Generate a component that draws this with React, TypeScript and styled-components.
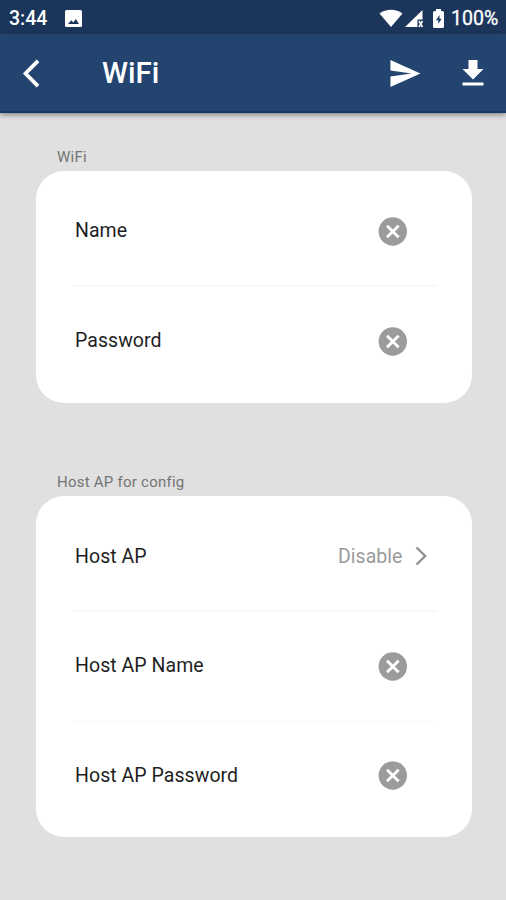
import React from 'react';
import styled, { createGlobalStyle } from 'styled-components';

const GlobalStyle = createGlobalStyle`
  *, *::before, *::after { box-sizing: border-box; }
  html, body { margin: 0; padding: 0; background: #e0e0e0; }
  body { font-family: Roboto, 'Noto Sans', sans-serif; }
  svg { display: block; flex: none; }
`;

const Screen = styled.div`
  display: flex;
  flex-direction: column;
  width: 506px;
  height: 900px;
  overflow: hidden;
  background: #e0e0e0;
`;

const StatusBar = styled.header`
  display: flex;
  align-items: center;
  height: 34px;
  padding: 3px 7px 0 9px;
  background: #1b355b;
  color: #fff;
  font-size: 19.5px;
  font-weight: 500;
  line-height: 30px;
`;

const Clock = styled.span`
  width: 56px;
`;

const StatusIcons = styled.div`
  display: flex;
  align-items: center;
  margin-left: auto;
`;

const Battery = styled.span`
  width: 48px;
  margin-left: 5px;
  font-weight: 400;
  -webkit-text-stroke: 0.3px #fff;
`;

const AppBar = styled.nav`
  display: flex;
  align-items: center;
  flex: none;
  height: 79px;
  padding: 1px 15px 0 20px;
  background: #22446f;
  border-bottom: 2px solid #17376a;
  box-shadow: 0 2px 5px rgba(0, 0, 0, 0.4);
  color: #fff;
`;

const IconButton = styled.button<{ $gap?: number }>`
  display: flex;
  padding: 0;
  margin: 0 0 0 ${({ $gap = 0 }) => $gap}px;
  border: 0;
  background: none;
  color: inherit;
`;

const Title = styled.h1`
  flex: 1;
  margin: 0 0 0 60px;
  font-size: 29.5px;
  font-weight: 500;
  line-height: 40px;
`;

const Content = styled.main`
  display: flex;
  flex-direction: column;
  padding: 34px 34.5px 0 36px;
`;

const Section = styled.section<{ $gap?: number }>`
  margin-top: ${({ $gap = 0 }) => $gap}px;
`;

const SectionLabel = styled.h2`
  height: 24px;
  margin: 0;
  padding-left: 21px;
  color: #747474;
  font-size: 15px;
  font-weight: 400;
  letter-spacing: 0.24px;
  line-height: 20px;
`;

const Card = styled.div<{ $height: number }>`
  height: ${({ $height }) => $height}px;
  padding: 5px 35px 0 36px;
  border-radius: 28px;
  background: #fff;
`;

const Row = styled.div<{ $height: number; $line?: string; $top?: number }>`
  display: flex;
  align-items: center;
  height: ${({ $height }) => $height}px;
  padding: ${({ $top = 0 }) => $top}px 7px 0 3px;
  border-bottom: 2px solid ${({ $line = 'transparent' }) => $line};
`;

const RowLabel = styled.span`
  flex: 1;
  color: #1f1f1f;
  font-size: 19.5px;
  letter-spacing: 0.05px;
  line-height: 24px;
`;

const ClearButton = styled(IconButton)`
  margin: 1px 20px 0 0;
  color: #9b9b9b;
`;

const Value = styled.span`
  margin-right: 11px;
  color: #9b9b9b;
  font-size: 19.5px;
  letter-spacing: 0.05px;
  line-height: 24px;
`;

const Clear = () => (
  <ClearButton aria-label="Clear">
    <svg width="34" height="34" viewBox="0 0 34 34">
      <circle cx="16.800" cy="16.500" r="14.200" fill="currentColor" />
      <path d="M11 10.700l11.600 11.600M22.600 10.700L11 22.300" stroke="#fff" strokeWidth="2.900" />
    </svg>
  </ClearButton>
);

export default function App() {
  return (
    <Screen>
      <GlobalStyle />
      <StatusBar>
        <Clock>3:44</Clock>
        <svg width="17" height="17" viewBox="0 0 17 17">
          <path
            fill="#fff"
            fillRule="evenodd"
            d="M1.500 0h14A1.500 1.500 0 0 1 17 1.500v14a1.500 1.500 0 0 1-1.500 1.500h-14A1.500 1.500 0 0 1 0 15.500v-14A1.500 1.500 0 0 1 1.500 0zM3 14h11l-3.200-5-2.500 3.400-2-2.200z"
          />
        </svg>
        <StatusIcons>
          <svg width="72" height="22" viewBox="0 0 72 22" fill="#fff">
            <path d="M5.500 5.500C12 .5 22 .5 28.500 5.500L17 19z" />
            <path d="M48.500 2v9.500h-5V19H31z" />
            <path d="M45 13l3.500 6M48.500 13L45 19" stroke="#fff" strokeWidth="1.500" />
            <path
              fillRule="evenodd"
              d="M62 1h5v2h1.500a1.500 1.500 0 0 1 1.500 1.500v14A1.500 1.500 0 0 1 68.500 20h-8a1.500 1.500 0 0 1-1.500-1.500v-14A1.500 1.500 0 0 1 60.500 3H62zM65.500 7L62 12.200h2.300V16l3.300-5.300h-2.100z"
            />
          </svg>
          <Battery>100%</Battery>
        </StatusIcons>
      </StatusBar>
      <AppBar>
        <IconButton aria-label="Back">
          <svg width="22" height="32" viewBox="0 0 22 32" fill="none" stroke="#fff" strokeWidth="3.8">
            <path d="M18 3.800L5.500 16.500 18 29.200" />
          </svg>
        </IconButton>
        <Title>WiFi</Title>
        <IconButton aria-label="Send">
          <svg width="36" height="36" viewBox="0 0 24 24" fill="currentColor">
            <path d="M2.300 21.300L22.300 12.300 2.300 3.300v7l14 2-14 2z" />
          </svg>
        </IconButton>
        <IconButton aria-label="Download" $gap={32}>
          <svg width="36" height="36" viewBox="0 0 24 24" fill="currentColor">
            <path d="M19 9.300h-4v-6H9v6H5l7 7 7-7zM5 18.300v2h14v-2H5z" />
          </svg>
        </IconButton>
      </AppBar>
      <Content>
        <Section>
          <SectionLabel>WiFi</SectionLabel>
          <Card $height={232}>
            <Row $height={111} $line="#f8f8f8" $top={1}>
              <RowLabel>Name</RowLabel>
              <Clear />
            </Row>
            <Row $height={109} $top={1}>
              <RowLabel>Password</RowLabel>
              <Clear />
            </Row>
          </Card>
        </Section>
        <Section $gap={69}>
          <SectionLabel>Host AP for config</SectionLabel>
          <Card $height={341}>
            <Row $height={111} $line="#f7f7f7" $top={2}>
              <RowLabel>Host AP</RowLabel>
              <Value>Disable</Value>
              <svg width="16" height="22" viewBox="0 0 16 22" fill="none" stroke="#919191" strokeWidth="2.400">
                <path d="M2.500 1.500l8.700 8.500-8.700 8.500" />
              </svg>
            </Row>
            <Row $height={110} $line="#fcfcfc">
              <RowLabel>Host AP Name</RowLabel>
              <Clear />
            </Row>
            <Row $height={109}>
              <RowLabel>Host AP Password</RowLabel>
              <Clear />
            </Row>
          </Card>
        </Section>
      </Content>
    </Screen>
  );
}
